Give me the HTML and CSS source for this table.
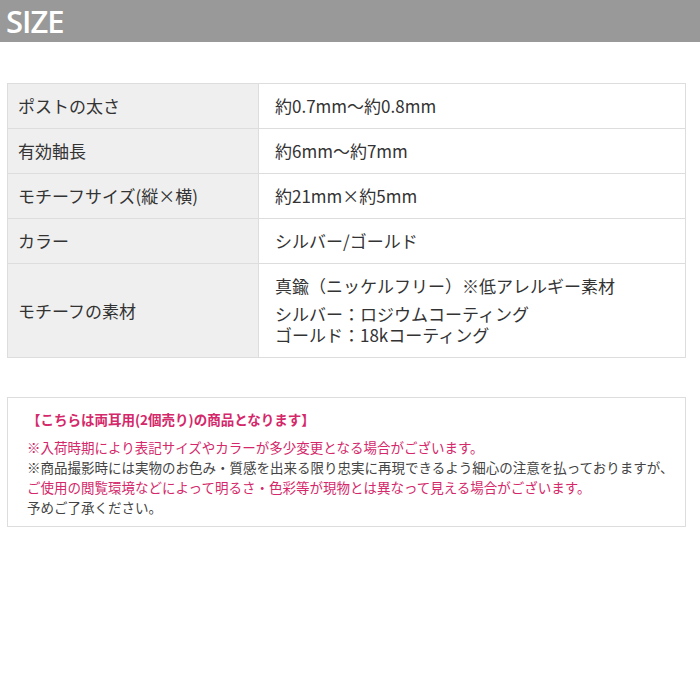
FILE: index.html
```html
<!DOCTYPE html>
<html lang="ja">
<head>
  <meta charset="UTF-8">
  <title>SIZE</title>
  <link rel="stylesheet" href="styles.css">
</head>
<body>
  <div class="heading">SIZE</div>
  <div class="content">
    <table class="spec">
      <tr>
        <th>ポストの太さ</th>
        <td>約0.7mm〜約0.8mm</td>
      </tr>
      <tr>
        <th>有効軸長</th>
        <td>約6mm〜約7mm</td>
      </tr>
      <tr>
        <th>モチーフサイズ(縦×横)</th>
        <td>約21mm×約5mm</td>
      </tr>
      <tr>
        <th>カラー</th>
        <td>シルバー/ゴールド</td>
      </tr>
      <tr>
        <th>モチーフの素材</th>
        <td class="multi">
          <p class="first">真鍮（ニッケルフリー）※低アレルギー素材</p>
          <p>シルバー：ロジウムコーティング</p>
          <p>ゴールド：18kコーティング</p>
        </td>
      </tr>
    </table>
    <div class="notes">
      <p class="title">【こちらは両耳用(2個売り)の商品となります】</p>
      <p class="pink">※入荷時期により表記サイズやカラーが多少変更となる場合がございます。</p>
      <p>※商品撮影時には実物のお色み・質感を出来る限り忠実に再現できるよう細心の注意を払っておりますが、</p>
      <p class="pink">ご使用の閲覧環境などによって明るさ・色彩等が現物とは異なって見える場合がございます。</p>
      <p>予めご了承ください。</p>
    </div>
  </div>
</body>
</html>
```

FILE: styles.css
```css
body { margin: 0; padding: 0; background: #fff; font-family: "Noto Sans CJK JP", "Noto Sans", sans-serif; color: #333; }
.heading { background: #999; height: 42px; line-height: 42px; padding-left: 6px; color: #fff; font-family: "Open Sans", "Noto Sans", sans-serif; font-weight: 600; font-size: 31px; letter-spacing: -1px; }
.content { width: 679px; margin-left: 7px; padding-top: 41px; }
.spec { width: 100%; border-collapse: collapse; font-size: 17px; }
.spec th, .spec td { border: 1px solid #ddd; text-align: left; font-weight: normal; line-height: 24px; padding: 10px 10px; }
.spec th { width: 230px; background: #efefef; }
.spec td { padding-left: 16px; }
.spec td.multi { padding-top: 10px; padding-bottom: 12px; }
.spec p { margin: 0; line-height: 21px; }
.spec p.first { line-height: 24px; margin-bottom: 5px; }
.notes { margin-top: 39px; border: 1px solid #ddd; padding: 11px 10px 9px 19px; font-size: 13.5px; color: #444; }
.notes p { margin: 0; line-height: 20px; white-space: nowrap; }
.notes .title { color: #d4286a; font-weight: bold; margin-bottom: 8px; }
.notes .pink { color: #d4286a; }
```
